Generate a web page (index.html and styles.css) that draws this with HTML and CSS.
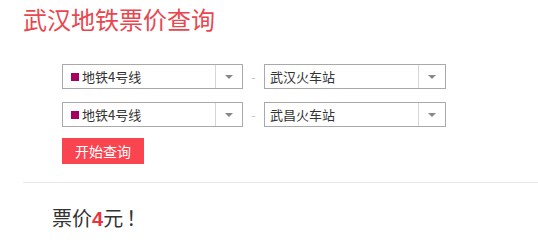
FILE: index.html
```html
<!DOCTYPE html>
<html lang="zh-CN">
<head>
<meta charset="utf-8">
<title>武汉地铁票价查询</title>
<link rel="stylesheet" href="styles.css">
</head>
<body>
<div class="page">
  <h1 class="title">武汉地铁票价查询</h1>
  <div class="form">
    <div class="row">
      <div class="select line-select">
        <span class="value"><i class="swatch"></i>地铁4号线</span>
        <span class="arrow"><i class="tri"></i></span>
      </div>
      <span class="dash">-</span>
      <div class="select station-select">
        <span class="value">武汉火车站</span>
        <span class="arrow"><i class="tri"></i></span>
      </div>
    </div>
    <div class="row">
      <div class="select line-select">
        <span class="value"><i class="swatch"></i>地铁4号线</span>
        <span class="arrow"><i class="tri"></i></span>
      </div>
      <span class="dash">-</span>
      <div class="select station-select">
        <span class="value">武昌火车站</span>
        <span class="arrow"><i class="tri"></i></span>
      </div>
    </div>
    <button class="btn">开始查询</button>
  </div>
  <hr class="divider">
  <p class="result">票价<b class="num">4</b>元<span class="excl">！</span></p>
</div>
</body>
</html>
```
FILE: styles.css
```css
html, body {
  margin: 0;
  padding: 0;
  background: #fff;
}
body {
  font-family: "Noto Sans CJK SC", "Noto Sans", sans-serif;
  color: #333;
}
.page {
  padding-left: 23px;
}
.title {
  margin: 0;
  padding-top: 3px;
  font-size: 24px;
  line-height: 32px;
  font-weight: normal;
  color: #e8474f;
  letter-spacing: 0;
}
.form {
  padding-left: 39px;
  padding-top: 29px;
}
.row {
  display: flex;
  align-items: center;
  margin-bottom: 13px;
}
.select {
  display: flex;
  box-sizing: border-box;
  height: 25px;
  border: 1px solid #a9a9a9;
  background: #fff;
}
.line-select {
  width: 181px;
}
.station-select {
  width: 182px;
}
.value {
  flex: 1;
  display: flex;
  align-items: center;
  padding-left: 8px;
  font-size: 13px;
  color: #333;
}
.swatch {
  display: inline-block;
  width: 8px;
  height: 8px;
  background: #a3005f;
  margin-right: 3px;
}
.station-select .value {
  padding-left: 5px;
}
.arrow {
  width: 26px;
  border-left: 1px solid #d6d6d6;
  display: flex;
  align-items: center;
  justify-content: center;
}
.tri {
  width: 0;
  height: 0;
  border-left: 4px solid transparent;
  border-right: 4px solid transparent;
  border-top: 4px solid #888;
}
.dash {
  width: 21px;
  text-align: center;
  color: #bbb;
  font-size: 12px;
}
.btn {
  display: block;
  margin-top: -2px;
  width: 82px;
  height: 26px;
  padding: 0;
  border: none;
  background: #fa4450;
  color: #fff;
  font-family: "Noto Sans CJK SC", sans-serif;
  font-size: 14px;
  line-height: 26px;
}
.divider {
  margin: 18px 0 0 0;
  border: none;
  border-top: 1px solid #e6e6e6;
  height: 0;
}
.result {
  margin: 21px 0 0 29px;
  font-size: 20px;
  line-height: 28px;
  color: #333;
}
.num {
  color: #e8343f;
  font-weight: bold;
  font-family: "Liberation Sans", Arial, sans-serif;
}
.excl {
  margin-left: 3px;
}
```
